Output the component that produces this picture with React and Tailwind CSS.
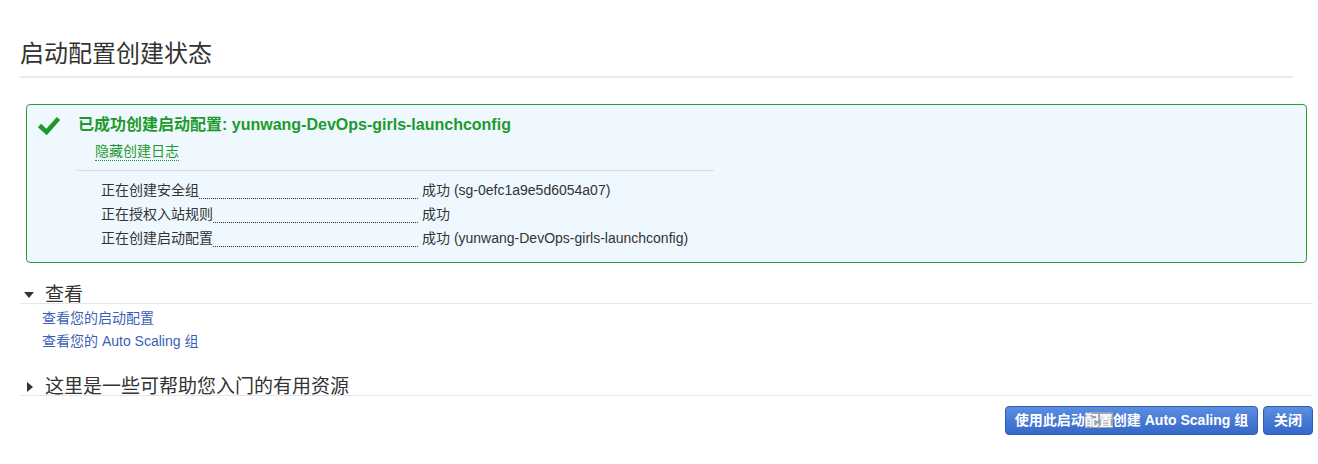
const FONT = { fontFamily: '"Liberation Sans", "Noto Sans CJK SC", sans-serif' };

const STEPS = [
  { label: "正在创建安全组", value: "成功 (sg-0efc1a9e5d6054a07)" },
  { label: "正在授权入站规则", value: "成功" },
  { label: "正在创建启动配置", value: "成功 (yunwang-DevOps-girls-launchconfig)" },
];

function Check() {
  return (
    <svg width="24" height="20" viewBox="0 0 24 20">
      <path d="M2.5 10.5 L9.5 17 L21.5 3.5" fill="none" stroke="#1e9a2c" strokeWidth="4.6" strokeLinejoin="miter" />
    </svg>
  );
}

function Secao({ aberta, titulo }) {
  return (
    <div className="flex items-center h-[18px] leading-[18px] border-b border-[#e6e6e6] text-[19px] text-[#333]">
      {aberta ? (
        <span className="ml-[4px] mr-[11px] w-0 h-0 border-l-[5px] border-r-[5px] border-t-[6px] border-l-transparent border-r-transparent border-t-[#333]" />
      ) : (
        <span className="ml-[7px] mr-[12px] w-0 h-0 border-t-[5px] border-b-[5px] border-l-[6px] border-t-transparent border-b-transparent border-l-[#333]" />
      )}
      <span>{titulo}</span>
    </div>
  );
}

export default function App() {
  return (
    <div className="w-[1318px] h-[464px] bg-white pl-5 pr-[5px]" style={FONT}>
      <div className="mr-[20px] pt-[39px] pb-[7px] border-b-2 border-[#e9e9e9]">
        <h1 className="text-[24px] leading-[30px] text-[#333]">启动配置创建状态</h1>
      </div>

      <div className="mt-[26px] mx-[6px] border border-[#22a32f] rounded-[4px] bg-[#f0f8ff] pt-[10px] pb-[12px] flex">
        <div className="w-[51px] pl-[10px]">
          <Check />
        </div>
        <div>
          <div className="text-[16px] leading-[20px] font-bold text-[#1e9a2c]">
            已成功创建启动配置: yunwang-DevOps-girls-launchconfig
          </div>
          <div className="mt-[4px] ml-[17px]">
            <span className="inline-block text-[14px] leading-[18px] text-[#1e9a2c] border-b border-dotted border-[#1e9a2c]">
              隐藏创建日志
            </span>
          </div>
          <div className="mt-[7px] -ml-px w-[637px] border-t border-[#dcdcdc]" />
          <div className="mt-[7px] pl-[23px]">
            {STEPS.map((s) => (
              <div key={s.label} className="flex h-[24px] leading-[24px] text-[14px] text-[#333]">
                <div className="w-[317px] flex items-end">
                  <span className="whitespace-nowrap self-center">{s.label}</span>
                  <span className="flex-1 mb-[3px] border-b border-dotted border-[#333]" />
                </div>
                <span className="ml-[4px] whitespace-nowrap">{s.value}</span>
              </div>
            ))}
          </div>
        </div>
      </div>

      <div className="mt-[23px]">
        <Secao aberta titulo="查看" />
        <div className="mt-[3px] ml-[22px] text-[14px] leading-[23px] text-[#3a5fb6]">
          <div>查看您的启动配置</div>
          <div>查看您的 Auto Scaling 组</div>
        </div>
      </div>

      <div className="mt-[25px]">
        <Secao titulo="这里是一些可帮助您入门的有用资源" />
      </div>

      <div className="mt-[10px] flex justify-end gap-[5px]">
        <button className="h-[29px] w-[253px] rounded-[4px] border border-[#2f5cb6] bg-linear-to-b from-[#5c8fe0] to-[#3567c9] text-white text-[14px] font-bold">
          使用此启动<span className="bg-[#9aa3b4]">配置</span>创建 Auto Scaling 组
        </button>
        <button className="h-[29px] w-[50px] rounded-[4px] border border-[#2f5cb6] bg-linear-to-b from-[#5c8fe0] to-[#3567c9] text-white text-[14px] font-bold">
          关闭
        </button>
      </div>
    </div>
  );
}
